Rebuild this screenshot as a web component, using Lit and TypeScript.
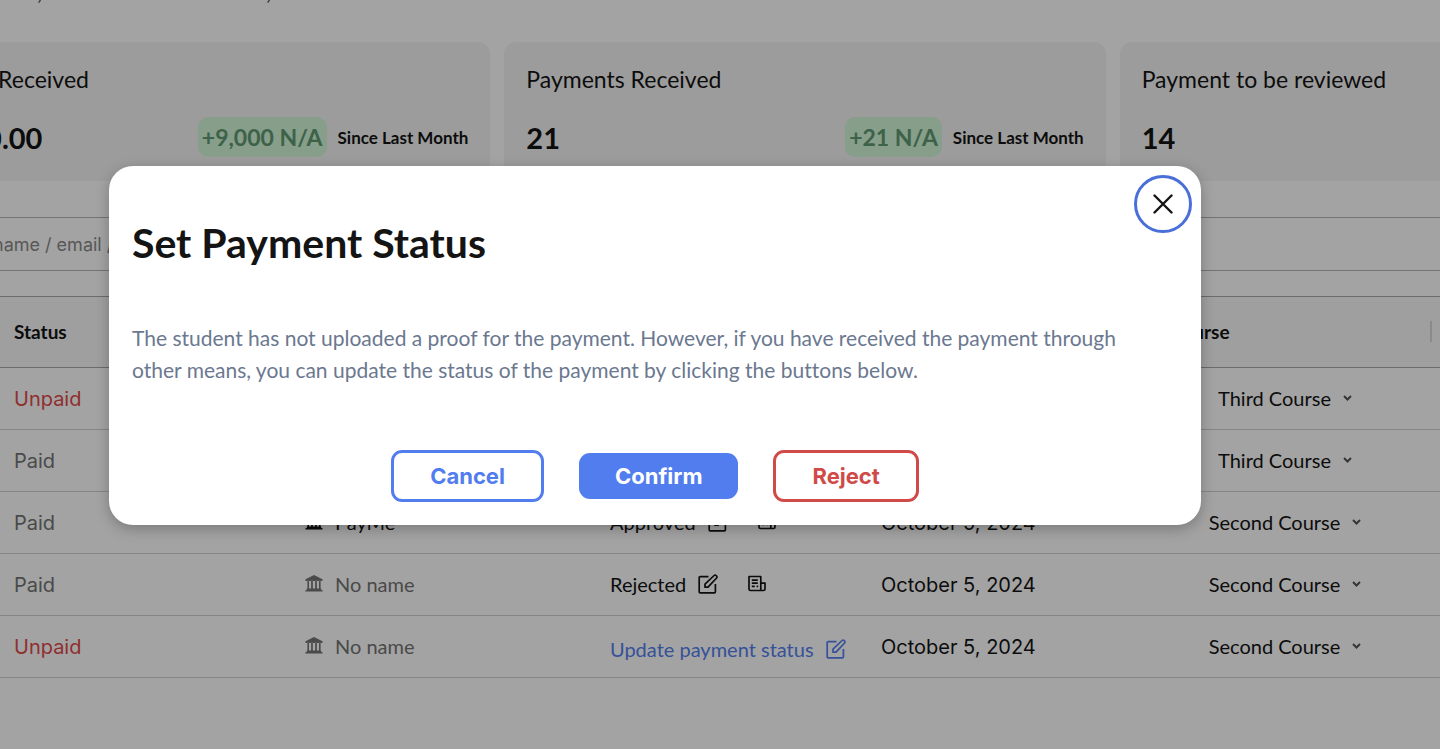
import { LitElement, html, css, svg, nothing } from "lit";
import { customElement } from "lit/decorators.js";

interface Row {
  paid: boolean;
  method?: string;
  review?: "Approved" | "Rejected" | "pending";
  date?: string;
  course: string;
}

const rows: Row[] = [
  { paid: false, course: "Third Course" },
  { paid: true, course: "Third Course" },
  { paid: true, method: "PayMe", review: "Approved", date: "October 5, 2024", course: "Second Course" },
  { paid: true, method: "No name", review: "Rejected", date: "October 5, 2024", course: "Second Course" },
  { paid: false, method: "No name", review: "pending", date: "October 5, 2024", course: "Second Course" },
];

const bankIcon = html`<svg class="bank" viewBox="0 0 16 16" aria-hidden="true">
  ${svg`<path fill="currentColor" d="M8 0 0 4v1.6h16V4zM1.8 5.3h1.5v8H1.8zM5.3 5.3h1.6v8H5.3zM9.1 5.3h1.6v8H9.1zM12.7 5.3h1.5v8h-1.5zM1.2 12.8h13.6v1.4H1.2zM0 14h16v1.6H0z"/>`}
</svg>`;

const editIcon = html`<svg class="edit" viewBox="0 0 20 20" fill="none" stroke="currentColor" stroke-width="1.7" stroke-linejoin="round" aria-hidden="true">
  ${svg`<path d="M10.5 2.6H2.2a1 1 0 0 0-1 1v14.2a1 1 0 0 0 1 1h14.2a1 1 0 0 0 1-1V10"/><path d="M7 10.2v3h3L18.6 4a1.4 1.4 0 0 0 0-2l-.5-.5a1.4 1.4 0 0 0-2 0z"/>`}
</svg>`;

const receiptIcon = html`<svg class="receipt" viewBox="0 0 18 16" fill="none" stroke="currentColor" stroke-width="1.7" stroke-linejoin="round" aria-hidden="true">
  ${svg`<path d="M12.8 15V1H1v12.5A1.5 1.5 0 0 0 2.5 15h13a1.5 1.5 0 0 0 1.5-1.5V7.6h-4.2"/><path d="M3.8 4.6h6M3.8 7.7h6M3.8 10.8h3M8.6 10.8h1.6"/>`}
</svg>`;

@customElement("app-root")
export class AppRoot extends LitElement {
  static styles = css`
    :host {
      display: block;
      height: 100vh;
      overflow: hidden;
      position: relative;
      background: #fff;
      color: #141414;
      font-family: Lato, sans-serif;
      font-size: 20px;
      font-variant-ligatures: none;
    }
    * { box-sizing: border-box; }
    button, input, select { font: inherit; color: inherit; background: none; border: 0; padding: 0; margin: 0; }
    .page { margin: 0 -281px 0 -111px; }
    .tabs { display: flex; height: 42px; padding-left: 111px; font-size: 22px; line-height: 24px; }
    .tab { margin-top: -20px; padding-left: 37px; width: 229px; }
    .cards { display: grid; grid-template-columns: repeat(3, 1fr); gap: 14px; }
    .card {
      background: #f5f5f5;
      border-radius: 12px;
      padding: 19px 22px 24px;
      height: 139px;
      display: flex;
      flex-direction: column;
      justify-content: space-between;
    }
    .label { font-size: 23px; line-height: 36px; margin: 0; font-weight: 400; }
    .figures { display: flex; align-items: center; gap: 11px; height: 40px; }
    .value { font-size: 29px; font-weight: 700; margin-right: auto; }
    .delta {
      background: #d2f7d8;
      color: #629a72;
      font-size: 23px;
      font-weight: 700;
      line-height: 40px;
      padding: 0 4px;
      border-radius: 10px;
    }
    .since { font-size: 17px; font-weight: 700; }
    .search {
      display: block;
      width: 100%;
      height: 54px;
      margin: 36px 0 25px;
      border: solid #b4b4b4;
      border-width: 1px 0;
      padding-left: 104px;
      font-family: Inter, sans-serif;
      font-size: 18px;
    }
    .search::placeholder { color: #8a8a8a; opacity: 1; }
    table { width: 100%; table-layout: fixed; border-collapse: collapse; }
    .c-edge { width: 109px; }
    .c-status { width: 291px; }
    .c-method { width: 305px; }
    .c-review { width: 271px; }
    .c-date { width: 273px; }
    .c-course { width: 294px; }
    th {
      height: 71px;
      background: #f9f9f9;
      border: solid #a8a8a8;
      border-width: 1px 0;
      padding: 0 16px 2px;
      text-align: left;
      font-size: 19px;
      font-weight: 700;
    }
    th.course { padding: 0 0 2px 32px; }
    .head { display: flex; justify-content: space-between; align-items: center; }
    .tick { width: 2px; height: 21px; background: #d8d8d8; }
    td { height: 62px; padding: 0 16px 2px; border-bottom: 1px solid #d0d0d0; }
    td.inter { font-family: Inter, sans-serif; padding-bottom: 0; }
    .muted { color: #747474; }
    .unpaid { color: #e04a4a; }
    .item { display: flex; align-items: center; gap: 12px; white-space: nowrap; }
    .bank { width: 18px; height: 17px; }
    .edit { width: 20px; height: 20px; }
    .receipt { width: 18px; height: 17px; }
    .icon { display: flex; }
    .icon + .icon { margin-left: 18px; }
    .update { color: #547ff0; padding-top: 6px; }
    .pick { display: flex; justify-content: center; align-items: center; gap: 12px; }
    select { appearance: none; field-sizing: content; }
    .chev { width: 9px; height: 6px; }
    .overlay {
      position: absolute;
      inset: 0;
      background: rgba(0, 0, 0, 0.36);
      display: flex;
      align-items: flex-start;
      padding: 166px 239px 0 109px;
    }
    .modal {
      position: relative;
      flex: 1;
      background: #fff;
      border-radius: 24px;
      padding: 50px 23px 23px;
      box-shadow: 0 4px 14px rgba(0, 0, 0, 0.25);
    }
    h2 { margin: 0; font-size: 41px; line-height: 54px; font-weight: 700; }
    .body { margin: 52px 0 64px; padding-right: 24px; font-size: 21px; line-height: 32px; color: #6b7890; }
    .actions { display: flex; justify-content: center; align-items: center; gap: 35px; }
    .btn { font: 700 22px/28px Inter, sans-serif; border-radius: 11px; padding: 9px 36px; }
    .outline { border: 3px solid currentColor; }
    .cancel { color: #527dee; }
    .confirm { background: #527dee; color: #fff; }
    .reject { color: #d04a48; }
    .close {
      position: absolute;
      top: 9px;
      right: 9px;
      width: 58px;
      height: 58px;
      border: 3px solid #4a6fd8;
      border-radius: 50%;
      display: grid;
      place-items: center;
    }
    .close svg { width: 20px; height: 20px; }
  `;

  private review(row: Row) {
    if (!row.review) return nothing;
    if (row.review === "pending") {
      return html`<button class="item update">Update payment status ${editIcon}</button>`;
    }
    return html`<div class="item">
      ${row.review}
      <button class="icon" aria-label="Edit status">${editIcon}</button>
      <button class="icon" aria-label="View receipt">${receiptIcon}</button>
    </div>`;
  }

  private row(row: Row) {
    const other = row.course === "Third Course" ? "Second Course" : "Third Course";
    return html`<tr>
      <td></td>
      <td class="inter ${row.paid ? "muted" : "unpaid"}">${row.paid ? "Paid" : "Unpaid"}</td>
      <td>
        ${row.method
          ? html`<div class="item ${row.method === "No name" ? "muted" : ""}">${bankIcon}${row.method}</div>`
          : nothing}
      </td>
      <td>${this.review(row)}</td>
      <td class="inter">${row.date ?? nothing}</td>
      <td>
        <label class="pick">
          <select aria-label="Course">
            <option selected>${row.course}</option>
            <option>${other}</option>
          </select>
          <svg class="chev" viewBox="0 0 9 6" fill="none" stroke="#555" stroke-width="2" aria-hidden="true">
            <path d="M1 1l3.5 3.5L8 1" />
          </svg>
        </label>
      </td>
      <td></td>
    </tr>`;
  }

  render() {
    return html`
      <main class="page">
        <div class="tabs"><span class="tab">,</span><span class="tab">,</span></div>
        <section class="cards">
          <div class="card">
            <h3 class="label">Amount Received</h3>
            <div class="figures">
              <span class="value">$9,000.00</span><span class="delta">+9,000 N/A</span><span class="since">Since Last Month</span>
            </div>
          </div>
          <div class="card">
            <h3 class="label">Payments Received</h3>
            <div class="figures">
              <span class="value">21</span><span class="delta">+21 N/A</span><span class="since">Since Last Month</span>
            </div>
          </div>
          <div class="card">
            <h3 class="label">Payment to be reviewed</h3>
            <div class="figures"><span class="value">14</span></div>
          </div>
        </section>
        <input class="search" type="search" aria-label="Search" placeholder="name / email / phone" />
        <table>
          <colgroup>
            <col class="c-edge" /><col class="c-status" /><col class="c-method" /><col class="c-review" />
            <col class="c-date" /><col class="c-course" /><col />
          </colgroup>
          <thead>
            <tr>
              <th></th><th>Status</th><th></th><th></th><th></th>
              <th class="course"><div class="head">Course<span class="tick"></span></div></th>
              <th></th>
            </tr>
          </thead>
          <tbody>${rows.map((r) => this.row(r))}</tbody>
        </table>
      </main>
      <div class="overlay">
        <div class="modal" role="dialog" aria-modal="true" aria-labelledby="title">
          <h2 id="title">Set Payment Status</h2>
          <p class="body">
            The student has not uploaded a proof for the payment. However, if you have received the payment through
            other means, you can update the status of the payment by clicking the buttons below.
          </p>
          <div class="actions">
            <button class="btn outline cancel">Cancel</button>
            <button class="btn confirm">Confirm</button>
            <button class="btn outline reject">Reject</button>
          </div>
          <button class="close" aria-label="Close">
            <svg viewBox="0 0 20 20" fill="none" stroke="#141414" stroke-width="2.4" stroke-linecap="round">
              <path d="M1.5 1.5l17 17M18.5 1.5l-17 17" />
            </svg>
          </button>
        </div>
      </div>
    `;
  }
}
